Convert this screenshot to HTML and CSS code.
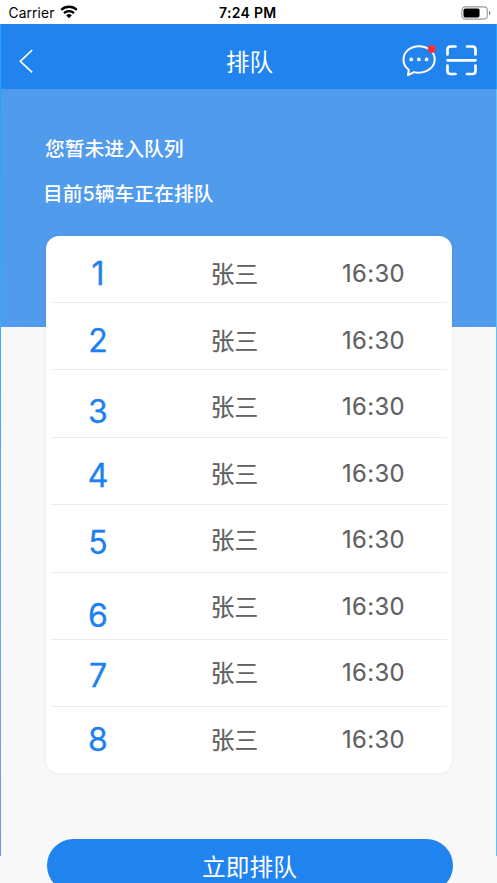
FILE: index.html
```html
<!DOCTYPE html>
<html lang="zh-CN">
<head>
<meta charset="utf-8">
<meta name="viewport" content="width=device-width, initial-scale=1">
<title>排队</title>
<link rel="stylesheet" href="styles.css">
</head>
<body>
<div class="screen">
  <div class="status">
    <div class="carrier"><span>Carrier</span>
      <svg class="wifi" viewBox="0 0 18 14" width="18" height="14"><path d="M1.2 4.9a11.2 11.2 0 0 1 15.6 0M4 8.1a7.3 7.3 0 0 1 10 0" fill="none" stroke="#000" stroke-width="2.3"/><path d="M6.2 10.4a4.1 4.1 0 0 1 5.6 0L9 13.2z"/></svg>
    </div>
    <div class="clock">7:24 PM</div>
    <svg class="battery" viewBox="0 0 30 14" width="30" height="14"><rect x=".9" y=".9" width="25.4" height="12.2" rx="3.5" fill="#fff" stroke="#999" stroke-width="1.1"/><rect x="2.5" y="2.5" width="16" height="9" rx="1.7"/><path d="M28 4.8c1.8.7 1.8 3.7 0 4.4z" fill="#777"/></svg>
  </div>
  <header class="nav">
    <svg class="back" viewBox="0 0 16 26" width="16" height="26"><path d="M14.2 2 2.3 13.3l11.9 11" fill="none" stroke="#fff" stroke-width="1.7"/></svg>
    <h1>排队</h1>
    <div class="actions">
      <svg viewBox="0 0 36 36" width="36" height="36"><path d="M18 4.2c-8.7 0-15.5 5.8-15.5 13.2 0 4.5 2.1 8 5.3 10.4L7 33.2l6-3.1c1.6.4 3.3.6 5 .6 8.7 0 15.7-5.9 15.7-13.3S26.7 4.2 18 4.2z" fill="none" stroke="#fff" stroke-width="2" stroke-linejoin="round"/><g fill="#fff"><circle cx="10.2" cy="17.4" r="1.9"/><circle cx="17.9" cy="17.4" r="1.9"/><circle cx="25.6" cy="17.4" r="1.9"/></g><circle cx="30.7" cy="7" r="4" fill="#ff303b"/></svg>
      <svg viewBox="0 0 32 32" width="32" height="32"><path d="M2.500 10.500V5.500Q2.500 2.500 5.500 2.500H10.500M22 2.500H27.500Q30.500 2.500 30.500 5.500V10.500M30.500 21.500V27Q30.500 30 27.500 30H22M10.500 30H5.500Q2.500 30 2.500 27V21.500M2.500 16.300H30.500" fill="none" stroke="#fff" stroke-width="2.700" stroke-linecap="round"/></svg>
    </div>
  </header>
  <main class="content">
    <section class="summary">
      <p>您暂未进入队列</p>
      <p class="waiting">目前5辆车正在排队</p>
    </section>
    <ol class="queue">
      <li><b>1</b><span>张三</span><time>16:30</time></li>
      <li><b>2</b><span>张三</span><time>16:30</time></li>
      <li><b>3</b><span>张三</span><time>16:30</time></li>
      <li><b>4</b><span>张三</span><time>16:30</time></li>
      <li><b>5</b><span>张三</span><time>16:30</time></li>
      <li><b>6</b><span>张三</span><time>16:30</time></li>
      <li><b>7</b><span>张三</span><time>16:30</time></li>
      <li><b>8</b><span>张三</span><time>16:30</time></li>
    </ol>
    <button class="join">立即排队</button>
  </main>
</div>
</body>
</html>
```
FILE: styles.css
```css
* { box-sizing: border-box; margin: 0; padding: 0; }
body { font-family: Inter, "Noto Sans CJK SC", sans-serif; background: #fff; }
.screen { height: 883px; overflow: hidden; display: flex; flex-direction: column; }
.status { height: 24px; flex: none; display: grid; grid-template-columns: 1fr auto 1fr; align-items: center; padding: 1px 6px 0 8.5px; color: #000; }
.carrier { display: flex; align-items: center; gap: 6px; font-size: 13.8px; letter-spacing: .1px; }
.wifi { margin-bottom: 1px; }
.clock { margin-left: -4px; font-size: 14px; font-weight: 600; letter-spacing: .3px; }
.battery { justify-self: end; }
.nav { height: 65px; flex: none; display: grid; grid-template-columns: 1fr auto 1fr; align-items: center; padding: 7px 19px 0 18px; background: #2183ee; border-left: 1px solid #22a4f8; border-right: 1px solid #22a4f8; }
.back { margin: 1px 0 0 -1px; }
.nav h1 { padding: 5px 0 0 3px; font-size: 23.5px; font-weight: 400; line-height: 36px; color: #fff; }
.actions { display: flex; justify-content: flex-end; align-items: center; gap: 8px; }
.content { flex: 1; min-height: 0; padding: 0 44px 0 45px; background: linear-gradient(#519bec 238px, #f8f8f8 238px); position: relative; }
.content::before, .content::after { content: ""; position: absolute; top: 0; width: 1px; height: 767px; }
.content::before { left: 0; background: linear-gradient(#22a4f8, #65aafa 70%, #7b8eed); }
.content::after { right: 0; background: #5dc3fa; }
.summary { height: 147px; padding-top: 45px; color: #fff; font-size: 19.8px; font-weight: 500; line-height: 30px; }
.waiting { margin: 15px 0 0 -2px; }
.queue { list-style: none; width: 406px; height: 537px; margin-left: .5px; padding: 0 5px; display: grid; grid-template-rows: 67px repeat(6, 67.4px) 1fr; background: #fff; border-radius: 13px; box-shadow: 0 0 4px rgba(30, 60, 60, .07); }
.queue li { display: grid; grid-template-columns: 95px 180px 1fr; align-items: start; text-align: center; line-height: 36px; color: #616161; border-bottom: 1px solid #ececee; --num: 20px; --text: 20px; }
.queue li:last-child { border-bottom: 0; }
.queue b { padding-top: var(--num); font-size: 32px; font-weight: 400; color: #1d80f1; -webkit-text-stroke: .3px #1d80f1; }
.queue span { padding-top: calc(var(--text) + 1px); padding-right: 2px; font-size: 23.7px; -webkit-text-stroke: .2px #616161; }
.queue time { padding-top: var(--text); padding-right: 25px; font-size: 23.8px; letter-spacing: .4px; -webkit-text-stroke: .15px #616161; }
.queue li:nth-child(2) { --text: 19.5px; }
.queue li:nth-child(3) { --num: 24px; --text: 18.5px; }
.queue li:nth-child(4) { --text: 18px; }
.queue li:nth-child(5) { --text: 17px; }
.queue li:nth-child(6) { --num: 25px; --text: 16px; }
.queue li:nth-child(7) { --num: 18px; --text: 15.5px; }
.queue li:nth-child(8) { --num: 15px; --text: 14.5px; }
.join { display: block; width: 406px; height: 53px; margin: 66px 0 0 1.5px; padding-top: 2px; border: 0; border-radius: 27px; background: #2183ee; color: #fff; font: 400 23.7px/53px Inter, "Noto Sans CJK SC", sans-serif; }
```
